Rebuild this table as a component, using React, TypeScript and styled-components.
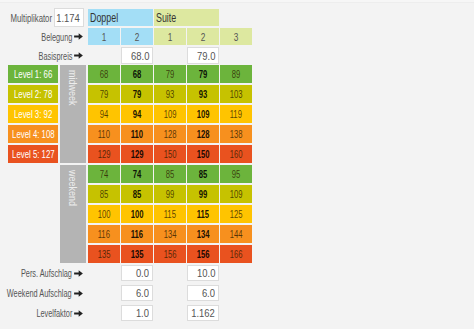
import React from "react";
import styled, { createGlobalStyle } from "styled-components";

const Global = createGlobalStyle`
  html, body { margin: 0; padding: 0; background: #f3f3f3; }
  body {
    font-family: "Liberation Sans", Arial, sans-serif;
  }
`;

const LEVEL_COLORS = ["#6cb43c", "#c6c200", "#ffc400", "#f7901e", "#e9521f"];

const Page = styled.div`
  width: 474px;
  height: 329px;
  box-sizing: border-box;
  padding: 9px 0 0 8px;
  background: linear-gradient(#f6f6f6 0, #f6f6f6 2px, #ededed 2px, #ededed 3px, #f3f3f3 3px);
`;

const Sheet = styled.div`
  display: flex;
  flex-direction: column;
  width: 245px;
`;

const Grid = styled.div<{ $rows: string; $rowGap: number; $mt?: number }>`
  display: grid;
  grid-template-columns: 51px 27px repeat(5, 32px);
  grid-template-rows: ${(p) => p.$rows};
  column-gap: 1px;
  row-gap: ${(p) => p.$rowGap}px;
  margin-top: ${(p) => p.$mt ?? 0}px;
`;

/* condensed look: the reference uses a narrow sans, so text is squeezed horizontally */
const Squeeze = styled.span<{ $sx?: number; $origin?: string }>`
  display: inline-block;
  white-space: nowrap;
  transform: scaleX(${(p) => p.$sx ?? 0.75});
  transform-origin: ${(p) => p.$origin ?? "center"};
`;

const MultiField = styled.div`
  grid-column: 1 / span 2;
  display: flex;
  align-items: center;
  justify-content: flex-end;
  gap: 2px;
  padding-right: 3px;
  margin-top: -1px;
  height: 19px;
  font-size: 10.5px;
  color: #555;
`;

const RowLabel = styled.div`
  grid-column: 1 / span 2;
  display: flex;
  align-items: center;
  justify-content: flex-end;
  gap: 2px;
  padding-right: 4px;
  font-size: 10.5px;
  color: #555;
  white-space: nowrap;
`;

const Field = styled.div<{ $col?: number; $w?: number; $h?: number }>`
  ${(p) => (p.$col ? `grid-column: ${p.$col};` : "")}
  box-sizing: border-box;
  flex-shrink: 0;
  width: ${(p) => p.$w ?? 32}px;
  height: ${(p) => p.$h ?? 17}px;
  background: #fff;
  border: 1px solid #dcdcdc;
  font-size: 11.5px;
  color: #555;
  display: flex;
  align-items: center;
  justify-content: flex-end;
  padding-right: 3px;
`;

const GroupHead = styled.div<{ $bg: string; $col: number }>`
  grid-column: ${(p) => p.$col} / span 2;
  background: ${(p) => p.$bg};
  font-size: 12px;
  color: #333;
  display: flex;
  align-items: center;
  padding-left: 2px;
`;

const BelegCell = styled.div<{ $bg: string }>`
  background: ${(p) => p.$bg};
  font-size: 11px;
  color: #555;
  display: flex;
  align-items: center;
  justify-content: center;
`;

const LevelTag = styled.div<{ $bg: string; $row: number }>`
  grid-column: 1;
  grid-row: ${(p) => p.$row};
  width: 50px;
  background: ${(p) => p.$bg};
  color: #fff;
  font-size: 11.5px;
  display: flex;
  align-items: center;
  justify-content: center;
`;

const Period = styled.div<{ $row: number }>`
  grid-column: 2;
  grid-row: ${(p) => p.$row} / span 5;
  width: 26px;
  background: #b4b4b4;
  color: #ededed;
  font-size: 11.5px;
  writing-mode: vertical-rl;
  display: flex;
  align-items: center;
  padding-top: 5px;
  box-sizing: border-box;
`;

const VerticalSqueeze = styled.span`
  display: inline-block;
  white-space: nowrap;
  transform: scaleY(0.78);
  transform-origin: top;
`;

const Cell = styled.div<{ $bg: string; $bold: boolean }>`
  background: ${(p) => p.$bg};
  font-size: 11px;
  font-weight: ${(p) => (p.$bold ? 700 : 400)};
  color: ${(p) => (p.$bold ? "rgba(0,0,0,0.9)" : "rgba(45,25,0,0.78)")};
  display: flex;
  align-items: center;
  justify-content: center;
`;

const ArrowSvg = styled.svg`
  flex-shrink: 0;
  display: block;
`;

const Arrow = () => (
  <ArrowSvg width="9" height="7" viewBox="0 0 10 8" aria-hidden="true">
    <path d="M0 2.8h5.2V0.3L10 4l-4.8 3.7V5.2H0z" fill="#222" />
  </ArrowSvg>
);

const midweek = [
  [68, 68, 79, 79, 89],
  [79, 79, 93, 93, 103],
  [94, 94, 109, 109, 119],
  [110, 110, 128, 128, 138],
  [129, 129, 150, 150, 160],
];
const weekend = [
  [74, 74, 85, 85, 95],
  [85, 85, 99, 99, 109],
  [100, 100, 115, 115, 125],
  [116, 116, 134, 134, 144],
  [135, 135, 156, 156, 166],
];
const levels = ["Level 1: 66", "Level 2: 78", "Level 3: 92", "Level 4: 108", "Level 5: 127"];

const BLUE = "#a3def6";
const LIME = "#dde8a0";

const Label = ({ text }: { text: string }) => (
  <RowLabel>
    <Squeeze $sx={0.7} $origin="right">{text}</Squeeze>
    <Arrow />
  </RowLabel>
);

const Input = ({ col, h, children }: { col: number; h?: number; children: string }) => (
  <Field $col={col} $h={h}>
    <Squeeze $sx={0.82} $origin="right">{children}</Squeeze>
  </Field>
);

const DataRow = ({ values, row, color }: { values: number[]; row: number; color: string }) => (
  <>
    {values.map((v, j) => (
      <Cell
        key={j}
        $bg={color}
        $bold={j === 1 || j === 3}
        style={{ gridRow: row, gridColumn: j + 3 }}
      >
        <Squeeze $sx={0.7}>{v}</Squeeze>
      </Cell>
    ))}
  </>
);

export default function App() {
  return (
    <>
      <Global />
      <Page>
        <Sheet>
          <Grid $rows="17px 17px 17px" $rowGap={2}>
            <MultiField>
              <Squeeze $sx={0.74} $origin="right">Multiplikator</Squeeze>
              <Field $w={30} $h={19}>
                <Squeeze $sx={0.82} $origin="right">1.174</Squeeze>
              </Field>
            </MultiField>
            <GroupHead $bg={BLUE} $col={3}>
              <Squeeze $sx={0.74} $origin="left">Doppel</Squeeze>
            </GroupHead>
            <GroupHead $bg={LIME} $col={5}>
              <Squeeze $sx={0.74} $origin="left">Suite</Squeeze>
            </GroupHead>
            <div />

            <Label text="Belegung" />
            <BelegCell $bg={BLUE}><Squeeze>1</Squeeze></BelegCell>
            <BelegCell $bg={BLUE}><Squeeze>2</Squeeze></BelegCell>
            <BelegCell $bg={LIME}><Squeeze>1</Squeeze></BelegCell>
            <BelegCell $bg={LIME}><Squeeze>2</Squeeze></BelegCell>
            <BelegCell $bg={LIME}><Squeeze>3</Squeeze></BelegCell>

            <Label text="Basispreis" />
            <Input col={4}>68.0</Input>
            <Input col={6}>79.0</Input>
          </Grid>

          <Grid $rows="repeat(10, 18px)" $rowGap={2} $mt={1}>
            <Period $row={1}><VerticalSqueeze>midweek</VerticalSqueeze></Period>
            <Period $row={6}><VerticalSqueeze>weekend</VerticalSqueeze></Period>
            {midweek.map((row, i) => (
              <React.Fragment key={`m${i}`}>
                <LevelTag $bg={LEVEL_COLORS[i]} $row={i + 1}>
                  <Squeeze $sx={0.68}>{levels[i]}</Squeeze>
                </LevelTag>
                <DataRow values={row} row={i + 1} color={LEVEL_COLORS[i]} />
              </React.Fragment>
            ))}
            {weekend.map((row, i) => (
              <DataRow key={`w${i}`} values={row} row={i + 6} color={LEVEL_COLORS[i]} />
            ))}
          </Grid>

          <Grid $rows="16px 16px 16px" $rowGap={4} $mt={2}>
            <Label text="Pers. Aufschlag" />
            <Input col={4} h={16}>0.0</Input>
            <Input col={6} h={16}>10.0</Input>
            <Label text="Weekend Aufschlag" />
            <Input col={4} h={16}>6.0</Input>
            <Input col={6} h={16}>6.0</Input>
            <Label text="Levelfaktor" />
            <Input col={4} h={16}>1.0</Input>
            <Input col={6} h={16}>1.162</Input>
          </Grid>
        </Sheet>
      </Page>
    </>
  );
}
